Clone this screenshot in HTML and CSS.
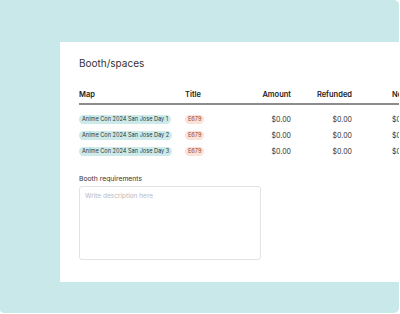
FILE: index.html
```html
<!DOCTYPE html>
<html lang="en">
<head>
    <meta charset="UTF-8">
    <meta name="viewport" content="width=device-width, initial-scale=1.0">
    <title>Booth spaces</title>
    <link rel="stylesheet" href="styles.css">
</head>
<body>
    <div class="panel">
        <div class="card">
            <h1>Booth/spaces</h1>

            <table class="booths">
                <colgroup>
                    <col class="col-map">
                    <col class="col-title">
                    <col class="col-amount">
                    <col class="col-refunded">
                    <col class="col-net">
                </colgroup>
                <thead>
                    <tr>
                        <th>Map</th>
                        <th>Title</th>
                        <th class="num">Amount</th>
                        <th class="num">Refunded</th>
                        <th class="net">Net</th>
                    </tr>
                </thead>
                <tbody>
                    <tr>
                        <td><span class="pill pill-map">Anime Con 2024 San Jose Day 1</span></td>
                        <td><span class="pill pill-code">E679</span></td>
                        <td class="num">$0.00</td>
                        <td class="num">$0.00</td>
                        <td class="net">$0.00</td>
                    </tr>
                    <tr>
                        <td><span class="pill pill-map">Anime Con 2024 San Jose Day 2</span></td>
                        <td><span class="pill pill-code">E679</span></td>
                        <td class="num">$0.00</td>
                        <td class="num">$0.00</td>
                        <td class="net">$0.00</td>
                    </tr>
                    <tr>
                        <td><span class="pill pill-map">Anime Con 2024 San Jose Day 3</span></td>
                        <td><span class="pill pill-code">E679</span></td>
                        <td class="num">$0.00</td>
                        <td class="num">$0.00</td>
                        <td class="net">$0.00</td>
                    </tr>
                </tbody>
            </table>

            <div class="field">
                <label for="requirements">Booth requirements</label>
                <textarea id="requirements" placeholder="Write description here"></textarea>
            </div>
        </div>
    </div>
</body>
</html>
```

FILE: styles.css
```css
body {
    margin: 0;
    padding: 0;
    background-color: #ffffff;
    font-family: Inter, 'Open Sans', sans-serif;
    color: #333333;
}

.panel {
    width: 399px;
    height: 313px;
    background-color: #c9e8e9;
    border-radius: 0 5px 5px 4px;
    overflow: hidden;
    padding-top: 42px;
    box-sizing: border-box;
}

.card {
    margin-left: 60px;
    width: 420px;
    height: 240px;
    background-color: #ffffff;
    padding: 14px 0 0 19px;
    box-sizing: border-box;
}

h1 {
    margin: 0;
    font-size: 10px;
    line-height: 14px;
    font-weight: 400;
    color: #333333;
}

.booths {
    margin-top: 20px;
    border-collapse: collapse;
    table-layout: fixed;
    width: 340px;
}

.col-map { width: 106px; }
.col-title { width: 60px; }
.col-amount { width: 46px; }
.col-refunded { width: 61px; }
.col-net { width: 67px; }

.booths th {
    padding: 0 0 3px;
    font-size: 7.5px;
    line-height: 10px;
    font-weight: 600;
    color: #1c1c1c;
    text-align: left;
    border-bottom: 2px solid #8c8c8c;
}

.booths td {
    height: 16px;
    padding: 0;
    font-size: 7px;
    color: #333333;
    vertical-align: middle;
}

.booths tbody tr:first-child td {
    padding-top: 6px;
}

.booths .num {
    text-align: right;
}

.booths .net {
    padding-left: 40px;
}

.pill {
    display: inline-block;
    padding: 0 3px;
    height: 9px;
    line-height: 9px;
    border-radius: 5px;
    font-size: 5.6px;
    font-weight: 400;
    white-space: nowrap;
}

.pill-map {
    background-color: #cdeaea;
    color: #2b3838;
}

.pill-code {
    background-color: #fde0d8;
    color: #8e4535;
}

.field {
    margin-top: 15px;
}

.field label {
    display: block;
    font-size: 6.8px;
    line-height: 10px;
    color: #333333;
    margin-bottom: 2px;
}

.field textarea {
    display: block;
    width: 182px;
    height: 74px;
    box-sizing: border-box;
    margin: 0;
    padding: 4px 5px;
    border: 1px solid #e3e3e3;
    border-radius: 3px;
    font-family: inherit;
    font-size: 6.5px;
    line-height: 10px;
    resize: none;
    outline: none;
}

.field textarea::placeholder {
    color: #b8b8c0;
}
```
